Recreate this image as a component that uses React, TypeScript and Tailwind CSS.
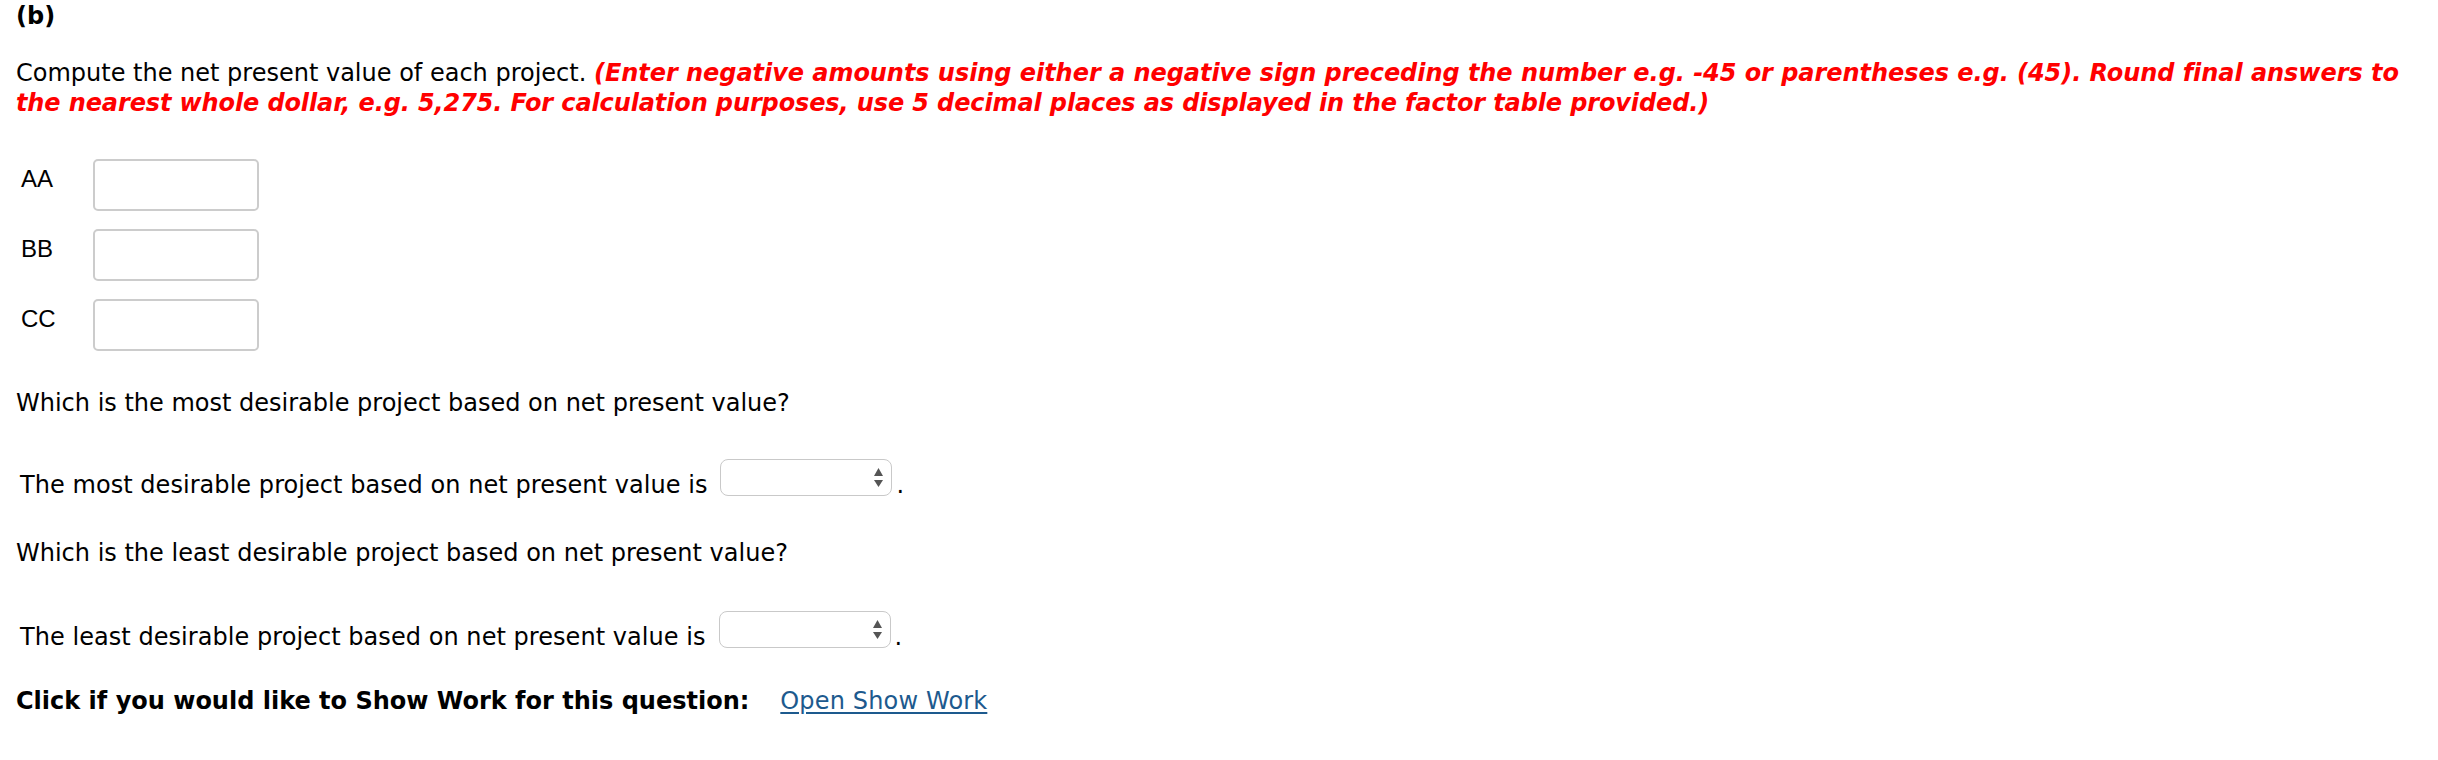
import React from "react";

const font = { fontFamily: '"DejaVu Sans", Verdana, sans-serif' };

function Arrows() {
  return (
    <svg width="11" height="22" viewBox="0 0 11 22" className="block">
      <path d="M5.5 1 L10 9 L1 9 Z" fill="#555555" />
      <path d="M5.5 20 L10 13 L1 13 Z" fill="#555555" />
    </svg>
  );
}

function SelectBox() {
  return (
    <div className="w-[172px] h-[37px] border-[1.5px] border-[#c9c9c9] rounded-[8px] bg-white flex items-center justify-end pr-[7px] shrink-0">
      <Arrows />
    </div>
  );
}

function InputRow({ label }: { label: string }) {
  return (
    <div className="flex items-start h-[70px]">
      <div
        className="w-[77px] pl-[5px] mt-[5px] text-[24px] leading-[30px] text-black"
        style={{ fontFamily: '"Liberation Sans", Arial, sans-serif' }}
      >
        {label}
      </div>
      <div className="w-[166px] h-[52px] border-2 border-[#cccccc] rounded-[5px] bg-white" />
    </div>
  );
}

function SelectRow({ text }: { text: string }) {
  return (
    <div className="flex items-start pl-[4px]">
      <span className="mt-[11px] text-[24px] leading-[30px] text-black whitespace-nowrap mr-[13px] tracking-[0.05px]">
        {text}
      </span>
      <SelectBox />
      <span className="mt-[11px] text-[24px] leading-[30px] text-black ml-[4px]">.</span>
    </div>
  );
}

export default function App() {
  return (
    <div className="bg-white w-[2438px] h-[760px] px-4 text-black" style={font}>
      <div className="pt-[1px] text-[24px] leading-[30px] font-bold">(b)</div>
      <p className="mt-[27px] text-[24px] leading-[30px]">
        Compute the net present value of each project.{" "}
        <span className="text-[#ff0000] font-bold italic">
          <span className="tracking-[-0.05px]">
            (Enter negative amounts using either a negative sign preceding the number e.g. -45 or parentheses e.g. (45). Round final answers to
          </span>{" "}
          <br />
          <span className="tracking-[-0.12px]">
            the nearest whole dollar, e.g. 5,275. For calculation purposes, use 5 decimal places as displayed in the factor table provided.)
          </span>
        </span>
      </p>
      <div className="mt-[41px]">
        <InputRow label="AA" />
        <InputRow label="BB" />
        <InputRow label="CC" />
      </div>
      <p className="mt-[19px] text-[24px] leading-[30px]">
        Which is the most desirable project based on net present value?
      </p>
      <div className="mt-[41px]">
        <SelectRow text="The most desirable project based on net present value is" />
      </div>
      <p className="mt-[38px] text-[24px] leading-[30px]">
        Which is the least desirable project based on net present value?
      </p>
      <div className="mt-[43px]">
        <SelectRow text="The least desirable project based on net present value is" />
      </div>
      <div className="mt-[34px] text-[24px] leading-[30px] flex">
        <span className="font-bold">Click if you would like to Show Work for this question:</span>
        <a href="#" className="ml-[31px] text-[#1d5a8e] underline underline-offset-[3px] tracking-[0.15px]">
          Open Show Work
        </a>
      </div>
    </div>
  );
}
